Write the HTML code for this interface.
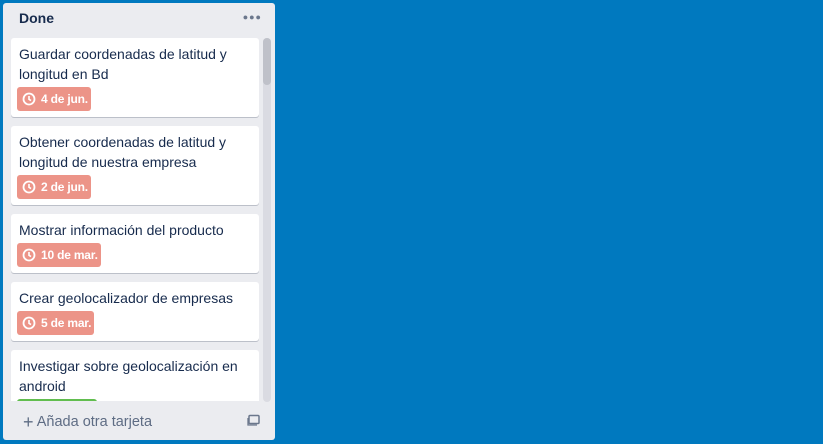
<!DOCTYPE html><html><head><style>
body{margin:0;width:823px;height:444px;background:#0079bf;font-family:"Liberation Sans",sans-serif;overflow:hidden;position:relative}
.list{position:absolute;left:3px;top:3px;width:272px;height:437px;background:#ebecf0;border-radius:3px}
.h{position:absolute;left:16px;top:7px;font-size:14px;font-weight:bold;color:#172b4d}
.dots{position:absolute;right:13px;top:9px;font-size:9px;color:#6b778c;letter-spacing:1px}
.scroll{position:absolute;left:8px;top:35px;width:248px;height:363px;overflow:hidden}
.card{position:absolute;left:0;width:248px;background:#fff;border-radius:3px;box-shadow:0 1px 0 #bcc0c9}
.t{margin:6px 8px 0;font-size:14px;line-height:20px;color:#172b4d}
.b{display:inline-block;margin:3px 0 0 6px;background:#ec9488;color:#fff;border-radius:3px;height:24px;line-height:24px;font-size:12px;font-weight:bold;padding:0 3px 0 24px;position:relative;letter-spacing:-0.2px}
.b svg{position:absolute;left:5px;top:5px}
.sb{position:absolute;left:260px;top:35px;width:8px;height:364px;background:#dadbe2;border-radius:4px}
.th{position:absolute;left:260px;top:35px;width:8px;height:47px;background:#bfc1c9;border-radius:4px}
.f{position:absolute;left:20px;top:409px;font-size:14.5px;color:#5e6c84}
</style></head><body>
<div class="list">
<div class="h">Done</div><div class="dots">●●●</div>
<div class="scroll">
<div class="card" style="top:0;height:79px"><div class="t">Guardar coordenadas de latitud y longitud en Bd</div><span class="b"><svg width="14" height="14" viewBox="0 0 14 14"><circle cx="7" cy="7" r="5.5" fill="none" stroke="#fff" stroke-width="1.8"/><path d="M7 4v3.3l2 1.3" fill="none" stroke="#fff" stroke-width="1.6"/></svg>4 de jun.</span></div>
<div class="card" style="top:88px;height:79px"><div class="t">Obtener coordenadas de latitud y longitud de nuestra empresa</div><span class="b"><svg width="14" height="14" viewBox="0 0 14 14"><circle cx="7" cy="7" r="5.5" fill="none" stroke="#fff" stroke-width="1.8"/><path d="M7 4v3.3l2 1.3" fill="none" stroke="#fff" stroke-width="1.6"/></svg>2 de jun.</span></div>
<div class="card" style="top:176px;height:59px"><div class="t">Mostrar información del producto</div><span class="b"><svg width="14" height="14" viewBox="0 0 14 14"><circle cx="7" cy="7" r="5.5" fill="none" stroke="#fff" stroke-width="1.8"/><path d="M7 4v3.3l2 1.3" fill="none" stroke="#fff" stroke-width="1.6"/></svg>10 de mar.</span></div>
<div class="card" style="top:244px;height:59px"><div class="t">Crear geolocalizador de empresas</div><span class="b"><svg width="14" height="14" viewBox="0 0 14 14"><circle cx="7" cy="7" r="5.5" fill="none" stroke="#fff" stroke-width="1.8"/><path d="M7 4v3.3l2 1.3" fill="none" stroke="#fff" stroke-width="1.6"/></svg>5 de mar.</span></div>
<div class="card" style="top:312px;height:79px"><div class="t">Investigar sobre geolocalización en android</div><span class="b" style="background:#61bd4f;width:53px"></span></div>
</div>
<div class="sb"></div><div class="th"></div>
<div class="f"><span style="font-size:18px;vertical-align:-2px">+</span> Añada otra tarjeta</div>
<svg style="position:absolute;left:244px;top:411px" width="13" height="13" viewBox="0 0 13 13"><rect x="2" y="1.5" width="10" height="8" rx="1" fill="none" stroke="#6b778c" stroke-width="1.5"/><path d="M1 4v7h9" fill="none" stroke="#6b778c" stroke-width="1.3"/></svg>
</div>
</body></html>
